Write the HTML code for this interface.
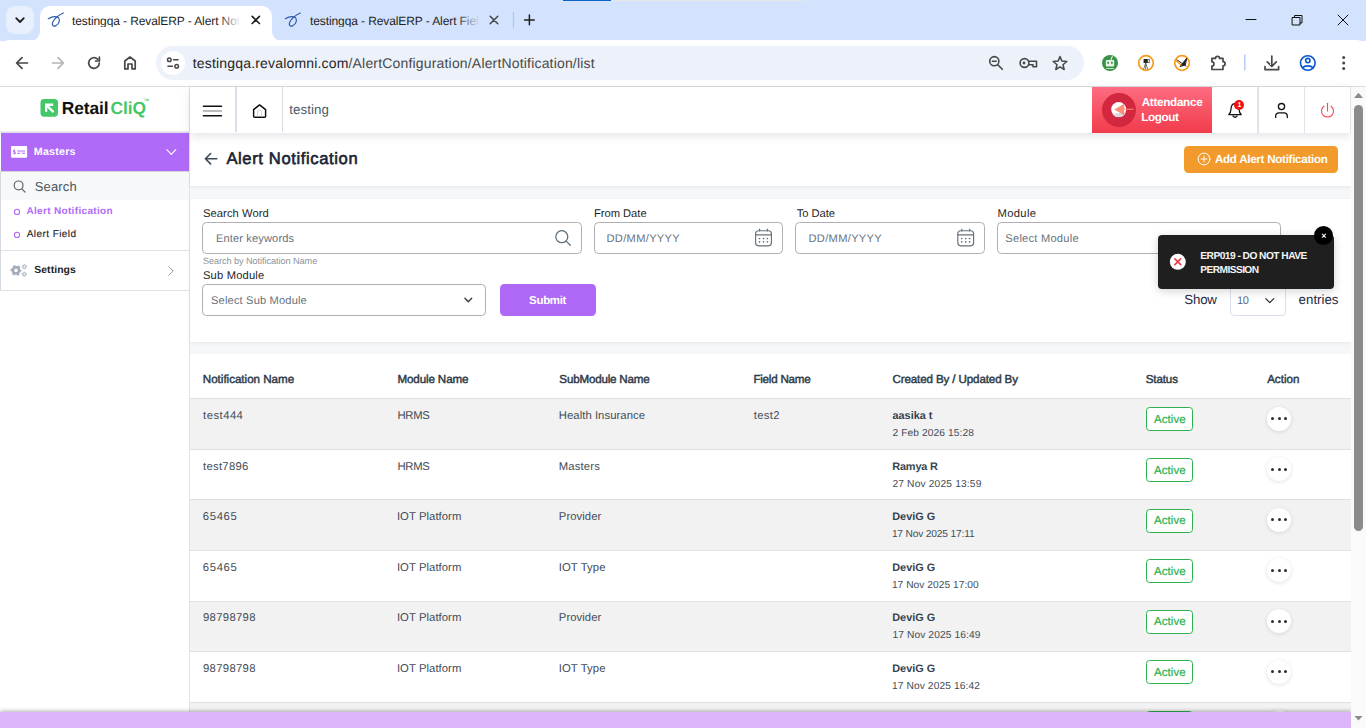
<!DOCTYPE html>
<html lang="en">
<head>
<meta charset="utf-8">
<title>testingqa - RevalERP - Alert Notification</title>
<style>
*{box-sizing:border-box;margin:0;padding:0}
html,body{width:1366px;height:728px;overflow:hidden;background:#fff}
body{font-family:"Liberation Sans",sans-serif;color:#222;position:relative;text-rendering:geometricPrecision}
.abs{position:absolute}
.t{position:absolute;white-space:nowrap;line-height:1}
svg{position:absolute;overflow:visible;fill:none}
/* ---------- browser chrome ---------- */
#tabstrip{left:0;top:0;width:1366px;height:41px;background:#d3e3fd}
#toolbar{left:0;top:40px;width:1366px;height:46px;background:#fff;border-radius:9px 9px 0 0}
#tbline{left:0;top:86px;width:1366px;height:1px;background:#dadce0}
#tabsearch{left:6px;top:6px;width:28px;height:28px;border-radius:9px;background:#e8f0fe}
#tab1{left:40px;top:6px;width:232px;height:35px;background:#fff;border-radius:10px 10px 0 0}
.flare{width:10px;height:10px;top:31px;background:radial-gradient(circle at var(--cx) 0,#d3e3fd 9.5px,#fff 10.5px)}
#omni{left:156px;top:46px;width:928px;height:34px;border-radius:17px;background:#edf2fa}
#siteinfo{left:161px;top:51px;width:24px;height:24px;border-radius:12px;background:#fff}
.fade1{left:219px;top:10px;width:22px;height:22px;background:linear-gradient(90deg,rgba(255,255,255,0),#fff)}
.fade2{left:456px;top:10px;width:24px;height:22px;background:linear-gradient(90deg,rgba(211,227,253,0),#d3e3fd)}
/* ---------- app ---------- */
#app{left:0;top:87px;width:1351px;height:641px;background:#f6f7f9;overflow:hidden}
#sidebar{left:0;top:0;width:190px;height:641px;background:#fff;border-right:1px solid #dfe3ea}
#header{left:190px;top:0;width:1161px;height:46px;background:#fff;box-shadow:0 3px 10px rgba(40,50,70,.13)}
.vline{position:absolute;top:0;width:1px;height:46px;background:#e3e6ee}
#scroll{left:1351px;top:87px;width:15px;height:641px;background:#fafafa;z-index:6}
#thumb{left:3px;top:18px;width:9px;height:426px;border-radius:5px;background:#8b8b8b}
.card{position:absolute;background:#fff;box-shadow:0 1px 3px rgba(40,50,70,.08)}
.inp{position:absolute;height:32px;border:1px solid #afafaf;border-radius:4.5px;background:#fff}
.row{position:absolute;left:0;width:1161px;border-top:1px solid #dce1e8}
.badge{position:absolute;left:956px;width:47px;height:24px;border:1.2px solid #2db24f;border-radius:3.5px;background:#fff}
.dots{position:absolute;left:1076.800px;width:24px;height:24px;border-radius:50%;background:#fff;box-shadow:0 1px 4px rgba(0,0,0,.12)}
.dots i{position:absolute;top:10.500px;width:3px;height:3px;border-radius:50%;background:#2e2e2e}
</style>
</head>
<body>

<!-- ================= BROWSER CHROME ================= -->
<div id="tabstrip" class="abs"></div>
<div class="abs" style="left:563px;top:0;width:48px;height:1px;background:#0a63c9"></div>
<div class="abs" style="left:611px;top:0;width:193px;height:1px;background:#e6e6e6"></div>
<div id="tabsearch" class="abs"></div>
<div id="tab1" class="abs"></div>
<div class="abs flare" style="left:30px;--cx:0"></div>
<div class="abs flare" style="left:272px;--cx:10px"></div>
<div id="toolbar" class="abs"></div>
<div id="tbline" class="abs"></div>
<div id="omni" class="abs"></div>
<div id="siteinfo" class="abs"></div>

<span class="t" id="t0" style="left:72.00px;top:14.55px;font-size:12px;color:#1f1f1f;letter-spacing:-0.100px;width:167px;overflow:hidden;">testingqa - RevalERP - Alert Notification</span>
<div class="abs fade1"></div>
<span class="t" id="t1" style="left:310.00px;top:14.55px;font-size:12px;color:#1f1f1f;letter-spacing:-0.100px;width:168px;overflow:hidden;">testingqa - RevalERP - Alert Field</span>
<div class="abs fade2"></div>
<span class="t" id="t2" style="left:192.80px;top:55.62px;font-size:14px;color:#1f1f1f;letter-spacing:0.174px;">testingqa.revalomni.com<span style="color:#4a4a4a">/AlertConfiguration/AlertNotification/list</span></span>

<svg width="1366" height="87" viewBox="0 0 1366 87" style="left:0;top:0" stroke-linecap="round" stroke-linejoin="round">
  <!-- tab search chevron -->
  <path d="M16.2 18.2 L20 22 L23.8 18.2" stroke="#1f1f1f" stroke-width="1.8"/>
  <!-- favicons -->
  <path d="M48.3 18.7 C52 16.6 56 16.2 58.4 17.6 C60.4 19.6 59.4 23.6 56 25.6 C53 27 51.4 24.6 52.8 22 C54.6 18.6 59 15 63.3 13" stroke="#2a5aaa" stroke-width="1.2"/>
  <path d="M285.3 18.7 C289 16.6 293 16.2 295.4 17.6 C297.4 19.6 296.4 23.6 293 25.6 C290 27 288.4 24.6 289.8 22 C291.6 18.6 296 15 300.3 13" stroke="#2a5aaa" stroke-width="1.2"/>
  <!-- tab close -->
  <path d="M252.2 16.3 L259.4 23.5 M259.4 16.3 L252.2 23.5" stroke="#1f1f1f" stroke-width="1.7"/>
  <path d="M490.2 16.2 L497.8 23.8 M497.8 16.2 L490.2 23.8" stroke="#444" stroke-width="1.5"/>
  <path d="M513.5 12 V28" stroke="#a8c7fa" stroke-width="1.2"/>
  <path d="M524.6 19.9 H534.2 M529.4 15.1 V24.7" stroke="#1f1f1f" stroke-width="1.5"/>
  <!-- window controls -->
  <path d="M1246 19.5 H1256" stroke="#111" stroke-width="1"/>
  <path d="M1292.5 17.5 h7.5 v7.5 h-7.5 z M1294.5 17.5 v-2 h7.5 v7.5 h-2" stroke="#111" stroke-width="1"/>
  <path d="M1338 15 L1348 25 M1348 15 L1338 25" stroke="#111" stroke-width="1"/>
  <!-- nav -->
  <path d="M27.5 63 H17 M22 57.6 L16.6 63 L22 68.4" stroke="#474747" stroke-width="1.7"/>
  <path d="M52.5 63 H63 M58 57.6 L63.4 63 L58 68.4" stroke="#b4b4b4" stroke-width="1.7"/>
  <path d="M99.3 63 A5.3 5.3 0 1 1 97.6 59.1 M99.4 57.2 V61 H95.6" stroke="#474747" stroke-width="1.7"/>
  <path d="M124.8 68.9 V61 L130 57 L135.2 61 V68.9 H132 V64 H128 V68.9 Z" stroke="#474747" stroke-width="1.7"/>
  <!-- site info -->
  <g stroke="#474747" stroke-width="1.5"><circle cx="169.3" cy="59.8" r="1.8"/><path d="M173.5 59.8 H178"/><circle cx="176.7" cy="66.2" r="1.8"/><path d="M168 66.2 H172.5"/></g>
  <!-- omnibox right icons -->
  <g stroke="#474747" stroke-width="1.6"><circle cx="994.3" cy="61.2" r="4.6"/><path d="M997.8 64.8 L1002.3 69.3"/><path d="M992.3 61.2 H996.3" stroke-width="1.4"/></g>
  <g stroke="#474747" stroke-width="1.6"><circle cx="1024.5" cy="63" r="4.4"/><circle cx="1024" cy="63" r="1.4" fill="#474747" stroke="none"/><path d="M1029 61.2 H1036.5 V66.8 H1033 V64.8 H1029"/></g>
  <path d="M1060 56.5 L1061.9 61.1 L1066.8 61.5 L1063 64.7 L1064.2 69.5 L1060 66.9 L1055.8 69.5 L1057 64.7 L1053.2 61.5 L1058.1 61.1 Z" stroke="#474747" stroke-width="1.5"/>
  <!-- extensions -->
  <circle cx="1110" cy="63" r="8" fill="#3a9247"/>
  <rect x="1105.8" y="60" width="8.4" height="6.4" rx="1" fill="#e6f2e6"/><rect x="1107.3" y="61.8" width="1.7" height="1.9" fill="#3a9247"/><rect x="1111" y="61.8" width="1.7" height="1.9" fill="#3a9247"/><path d="M1111 59.8 L1112.3 56.5" stroke="#e6f2e6" stroke-width="1.1"/><path d="M1106.5 68.5 H1113.5" stroke="#bfe0c0" stroke-width="1"/>
  <circle cx="1146" cy="63" r="7.3" fill="#fff" stroke="#f59b1c" stroke-width="1.7"/>
  <rect x="1143.6" y="59" width="4.2" height="4" fill="#222"/><path d="M1147.8 60 L1149.3 59 V63 L1147.8 62 M1145.7 63 L1143.7 69 M1145.7 63 L1147.7 69 M1145.7 63 V69" stroke="#555" stroke-width=".8"/>
  <circle cx="1182" cy="63" r="7.3" fill="#fff" stroke="#f59b1c" stroke-width="1.7"/>
  <path d="M1177 60 L1186 66 M1186.5 58.5 L1180 66.5 L1185 65 Z" stroke="#222" stroke-width="1" fill="#222"/><path d="M1176.5 61 L1181 65" stroke="#f59b1c" stroke-width="1.3"/>
  <path d="M1211.9 58.4 H1215.4 A2.1 2.1 0 0 1 1219.6 58.4 H1223 V61.7 A2.1 2.1 0 0 1 1223 65.900 V69.500 H1211.9 V66 A2.1 2.1 0 0 0 1211.9 61.800 Z" stroke="#474747" stroke-width="1.7"/>
  <path d="M1244.8 55 V70" stroke="#a8c7fa" stroke-width="1.3"/>
  <path d="M1271.8 56 V66 M1267.3 61.8 L1271.8 66.3 L1276.3 61.8 M1265 66.5 V69.6 H1278.6 V66.5" stroke="#474747" stroke-width="1.7"/>
  <g stroke="#0b57d0" stroke-width="1.6"><circle cx="1307.8" cy="63" r="7.3"/><circle cx="1307.8" cy="60.6" r="2.2"/><path d="M1302.6 67.8 C1304.5 65.2 1311 65.2 1313 67.8"/></g>
  <g fill="#474747"><circle cx="1343.7" cy="57.4" r="1.5"/><circle cx="1343.7" cy="63" r="1.5"/><circle cx="1343.7" cy="68.6" r="1.5"/></g>
</svg>

<!-- ================= APP ================= -->
<div id="app" class="abs">
  <div id="sidebar" class="abs"></div>
  <div class="abs" style="left:0;top:44px;width:189px;height:2px;background:linear-gradient(#eceef2,#d9dce3)"></div>
  <div class="abs" style="left:1px;top:46px;width:188px;height:38px;background:#b06af7"></div>
  <div class="abs" style="left:1px;top:84px;width:188px;height:29px;background:#f7f8fa;border-top:1px solid #d3d5da"></div>
  <div class="abs" style="left:0;top:84px;width:1px;height:120px;background:#d5d9e0"></div>
  <div class="abs" style="left:1px;top:163px;width:188px;height:1px;background:#dfe2e8"></div>
  <div class="abs" style="left:0;top:203px;width:189px;height:1px;background:#dfe2e8"></div>
</div>

<svg width="20" height="20" viewBox="0 0 20 20" style="left:40px;top:98px">
  <rect x=".5" y=".9" width="17.5" height="17.8" rx="3.6" fill="#43c767"/>
  <path d="M5 5.6 H13.2 V7.9 H9 L14.3 13.2 L12.6 14.9 L7.3 9.6 V13.8 H5 Z" fill="#fff"/>
</svg>
<span class="t" id="t3" style="left:61.71px;top:99.70px;font-size:17.4px;font-weight:700;color:#111;letter-spacing:-0.116px;">Retail<span style="color:#43c767;margin-left:2.2px">CliQ</span></span>
<svg width="8" height="5" viewBox="0 0 8 5" style="left:144.4px;top:98px"><text x="0" y="3.4" font-family="Liberation Sans, sans-serif" font-size="3.4" font-weight="700" fill="#43c767" textLength="4.8" lengthAdjust="spacingAndGlyphs">TM</text></svg>
<svg width="190" height="220" viewBox="0 0 190 220" style="left:0;top:87px" stroke-linecap="round" stroke-linejoin="round">
  <rect x="11.1" y="59" width="16" height="11.8" rx=".8" fill="#fff"/>
  <path d="M14.2 63.2 H13.4 V64.8 H15.4 V66.6 H13.2 M14.4 62.4 V67.4" stroke="#b06af7" stroke-width=".8" stroke-linecap="butt"/>
  <path d="M17.2 64 H25 M17.2 66.3 H20.4 M21.8 66.3 H25" stroke="#b06af7" stroke-width="1.1" stroke-linecap="butt"/>
  <path d="M166.8 62.7 L171.3 67.4 L175.8 62.7" stroke="#fff" stroke-width="1.1"/>
  <circle cx="18.6" cy="98.4" r="4.4" stroke="#5f6770" stroke-width="1.2"/><path d="M21.9 101.8 L25 105" stroke="#5f6770" stroke-width="1.2"/>
  <circle cx="17" cy="124.9" r="2.6" stroke="#b06af7" stroke-width="1.1"/>
  <circle cx="17" cy="147.9" r="2.6" stroke="#b06af7" stroke-width="1.1"/>
  <path d="M168.6 179.6 L173.2 184 L168.6 188.4" stroke="#9a9fa6" stroke-width="1"/>
  <!-- settings gears -->
  <g stroke="#a2acb8" fill="none" stroke-linecap="butt"><circle cx="16" cy="183.400" r="3.100" stroke-width="2.600"/><circle cx="16" cy="183.400" r="4.700" stroke-width="1.400" stroke-dasharray="2.500 2.422" stroke-dashoffset="1.250"/>
  <circle cx="24.300" cy="179.700" r="1.500" stroke-width="1"/><circle cx="24.300" cy="179.700" r="2.250" stroke-width=".800" stroke-dasharray="1.100 1.256" stroke-dashoffset=".550"/>
  <circle cx="24.300" cy="187.200" r="1.500" stroke-width="1"/><circle cx="24.300" cy="187.200" r="2.250" stroke-width=".800" stroke-dasharray="1.100 1.256" stroke-dashoffset=".550"/></g>
</svg>
<span class="t" id="t4" style="left:33.87px;top:146.61px;font-size:10.7px;font-weight:700;color:#fff;letter-spacing:0.205px;">Masters</span>
<span class="t" id="t5" style="left:34.74px;top:179.65px;font-size:13px;color:#4a5560;letter-spacing:0.145px;">Search</span>
<span class="t" id="t6" style="left:26.39px;top:206.51px;font-size:10px;font-weight:700;color:#b06af7;letter-spacing:0.336px;">Alert Notification</span>
<span class="t" id="t7" style="left:26.75px;top:229.53px;font-size:10px;letter-spacing:0.428px;-webkit-text-stroke:.12px #222;">Alert Field</span>
<span class="t" id="t8" style="left:34.25px;top:265.59px;font-size:10.4px;font-weight:700;letter-spacing:0.072px;">Settings</span>

<div class="abs" id="hdr" style="left:190px;top:87px;width:1161px;height:46px;background:#fff;z-index:3;box-shadow:0 3px 9px rgba(40,50,70,.13)">
  <div class="vline" style="left:45px;width:1.5px;background:#dbe1e8;height:45px"></div>
  <div class="vline" style="left:91.8px;width:1.2px;background:#d8dde6;height:45px"></div>
  <div class="abs" style="left:902px;top:0;width:120px;height:46px;background:linear-gradient(#fd6c81,#f23b4b)"></div>
  <div class="abs" style="left:911.8px;top:5.6px;width:34px;height:34px;border-radius:50%;background:#d3273f"></div>
  <div class="vline" style="left:1067.4px;width:1.3px;background:#dfe3ea"></div>
  <div class="vline" style="left:1114px;width:1.2px;background:#dfe3ea"></div>
  <div class="vline" style="left:1160px;width:1.2px;background:#dfe3ea"></div>
</div>
<svg width="1161" height="46" viewBox="190 87 1161 46" style="left:190px;top:87px;z-index:4" stroke-linecap="round" stroke-linejoin="round">
  <path d="M203.400 106.300 H221.500 M203.400 115.700 H221.500" stroke="#111" stroke-width="1.500"/>
  <path d="M203.400 111 H221.500" stroke="#a6a6a6" stroke-width="1.500"/>
  <path d="M253.600 109.600 L259.600 104.900 L265.600 109.600 V116.200 Q265.600 117.300 264.500 117.300 H254.700 Q253.600 117.300 253.600 116.200 Z" stroke="#0c0c0c" stroke-width="1.450"/>
  <path d="M257.600 116.600 V112 Q257.600 109.900 259.600 109.900 Q261.600 109.900 261.600 112 V116.600" stroke="#c2c6ca" stroke-width=".800"/>
  <!-- attendance icon -->
  <circle cx="1118.700" cy="109.600" r="7.500" fill="#fff"/>
  <path d="M1112.600 114 A7.500 7.500 0 0 0 1125.800 112 Z" fill="#d9d9dd"/>
  <path d="M1114.200 109.400 L1124.200 103.800 V115.200 Z" fill="#ff8f7a" stroke="none"/>
  <path d="M1124 109.300 H1133" stroke="#ff8f7a" stroke-width="1.100"/>
  <!-- bell -->
  <path d="M1228.800 114.500 H1241.200 C1239 112.700 1239.100 110.300 1238.900 108.100 C1238.600 105.100 1236.800 103.500 1235 103.500 C1233.200 103.500 1231.400 105.100 1231.100 108.100 C1230.900 110.300 1231 112.700 1228.800 114.500 Z" stroke="#111" stroke-width="1.250"/>
  <path d="M1233 116 Q1235 118.500 1237 116" stroke="#111" stroke-width="1.250"/>
  <circle cx="1239" cy="105" r="5" fill="#f80d0d"/>
  <!-- user -->
  <circle cx="1281.500" cy="106.600" r="3.100" stroke="#111" stroke-width="1.300"/>
  <path d="M1275.700 117.500 V116 Q1275.700 112.800 1279 112.800 H1284 Q1287.300 112.800 1287.300 116 V117.500" stroke="#111" stroke-width="1.300"/>
  <!-- power -->
  <path d="M1327.500 103.300 V111" stroke="#f74b55" stroke-width="1.100"/>
  <path d="M1324 106.200 A6 6 0 1 0 1331 106.200" stroke="#f74b55" stroke-width="1.100"/>
</svg>

<span class="t" id="t9" style="left:289.23px;top:102.52px;font-size:13.3px;color:#4a5a6a;letter-spacing:0.084px;z-index:4;">testing</span>
<span class="t" id="t10" style="left:1141.66px;top:96.63px;font-size:11.7px;font-weight:700;color:#fff;letter-spacing:-0.295px;z-index:4;">Attendance</span>
<span class="t" id="t11" style="left:1141.35px;top:111.63px;font-size:11.7px;font-weight:700;color:#fff;letter-spacing:-0.401px;z-index:4;">Logout</span>
<span class="t" id="t12" style="left:1237.44px;top:101.64px;font-size:7px;font-weight:700;color:#fff;z-index:4;">1</span>

<div id="scroll" class="abs"><div id="thumb" class="abs"></div>
<svg width="15" height="641" viewBox="0 0 15 641" style="left:0;top:0"><path d="M3 11 L7.500 5.800 L12 11 Z" fill="#8b8b8b"/><path d="M3.500 629 L7.500 633.600 L11.500 629 Z" fill="#8b8b8b"/></svg>
</div>

<!-- ================= MAIN ================= -->
<div class="card" style="left:190px;top:133px;width:1161px;height:53px"></div>
<div class="card" style="left:190px;top:198.500px;width:1161px;height:143.500px"></div>
<div class="card" id="tbl" style="left:190px;top:353.500px;width:1161px;height:380px;box-shadow:none">

<div class="row" style="top:44.75px;height:50.60px;background:#f2f2f2"><div class="badge" style="top:8.20px"></div><div class="dots" style="top:7.40px"><i style="left:4.700px"></i><i style="left:10.900px"></i><i style="left:17px"></i></div></div>
<div class="row" style="top:95.35px;height:50.60px;background:#fff"><div class="badge" style="top:8.20px"></div><div class="dots" style="top:7.40px"><i style="left:4.700px"></i><i style="left:10.900px"></i><i style="left:17px"></i></div></div>
<div class="row" style="top:145.95px;height:50.60px;background:#f2f2f2"><div class="badge" style="top:8.20px"></div><div class="dots" style="top:7.40px"><i style="left:4.700px"></i><i style="left:10.900px"></i><i style="left:17px"></i></div></div>
<div class="row" style="top:196.55px;height:50.60px;background:#fff"><div class="badge" style="top:8.20px"></div><div class="dots" style="top:7.40px"><i style="left:4.700px"></i><i style="left:10.900px"></i><i style="left:17px"></i></div></div>
<div class="row" style="top:247.15px;height:50.60px;background:#f2f2f2"><div class="badge" style="top:8.20px"></div><div class="dots" style="top:7.40px"><i style="left:4.700px"></i><i style="left:10.900px"></i><i style="left:17px"></i></div></div>
<div class="row" style="top:297.75px;height:50.60px;background:#fff"><div class="badge" style="top:8.20px"></div><div class="dots" style="top:7.40px"><i style="left:4.700px"></i><i style="left:10.900px"></i><i style="left:17px"></i></div></div>
<div class="row" style="top:348.35px;height:50.60px;background:#f2f2f2"><div class="badge" style="top:8.20px"></div><div class="dots" style="top:7.40px"><i style="left:4.700px"></i><i style="left:10.900px"></i><i style="left:17px"></i></div></div>
</div>
<div class="abs" style="left:0;top:711.500px;width:1351px;height:17px;background:#dcb5fb;box-shadow:0 -1px 4px rgba(0,0,0,.16)"></div>
<svg width="20" height="16" viewBox="203 150 20 16" style="left:203px;top:150px" stroke-linecap="round" stroke-linejoin="round"><path d="M216.800 158.700 H205.600 M210.600 153.500 L205.400 158.700 L210.600 163.900" stroke="#3a4a5a" stroke-width="1.600"/></svg>
<span class="t" id="t13" style="left:226.38px;top:150.61px;font-size:16.6px;color:#1a2233;letter-spacing:0.613px;-webkit-text-stroke:.6px;">Alert Notification</span>
<div class="abs" style="left:1184px;top:146.300px;width:153.800px;height:26.400px;border-radius:4.500px;background:#f29b2c"></div>
<svg width="16" height="16" viewBox="0 0 16 16" style="left:1196.400px;top:150.700px" stroke-linecap="round"><circle cx="8" cy="8" r="5.900" stroke="#fff" stroke-width="1"/><path d="M5.100 8 H10.900 M8 5.100 V10.900" stroke="#fff" stroke-width="1"/></svg>
<span class="t" id="t14" style="left:1214.95px;top:153.58px;font-size:11.6px;font-weight:700;color:#fff;letter-spacing:-0.276px;">Add Alert Notification</span>
<span class="t" id="t15" style="left:203.00px;top:208.67px;font-size:11.2px;color:#1f1f1f;letter-spacing:0.071px;">Search Word</span>
<span class="t" id="t16" style="left:593.98px;top:208.67px;font-size:11.2px;color:#1f1f1f;letter-spacing:-0.026px;">From Date</span>
<span class="t" id="t17" style="left:796.68px;top:208.68px;font-size:11.2px;color:#1f1f1f;letter-spacing:-0.036px;">To Date</span>
<span class="t" id="t18" style="left:997.57px;top:208.67px;font-size:11.2px;color:#1f1f1f;letter-spacing:0.340px;">Module</span>
<div class="inp" style="left:202px;top:222px;width:379.500px"></div>
<div class="inp" style="left:594px;top:222px;width:188.500px"></div>
<div class="inp" style="left:795px;top:222px;width:189.500px"></div>
<div class="inp" style="left:996.800px;top:222px;width:284px"></div>
<div class="inp" style="left:202px;top:284px;width:283.500px"></div>
<span class="t" id="t19" style="left:215.94px;top:233.59px;font-size:11.1px;color:#66717d;letter-spacing:0.130px;">Enter keywords</span>
<span class="t" id="t20" style="left:606.53px;top:233.60px;font-size:11.1px;color:#66717d;letter-spacing:0.327px;">DD/MM/YYYY</span>
<span class="t" id="t21" style="left:808.53px;top:233.60px;font-size:11.1px;color:#66717d;letter-spacing:0.327px;">DD/MM/YYYY</span>
<span class="t" id="t22" style="left:1005.33px;top:233.61px;font-size:11.1px;color:#66717d;letter-spacing:0.244px;">Select Module</span>
<span class="t" id="t23" style="left:202.90px;top:256.73px;font-size:9.2px;color:#8e9399;letter-spacing:-0.078px;">Search by Notification Name</span>
<span class="t" id="t24" style="left:202.99px;top:270.57px;font-size:11.2px;color:#1f1f1f;letter-spacing:0.166px;">Sub Module</span>
<span class="t" id="t25" style="left:211.07px;top:295.60px;font-size:11.1px;color:#66717d;letter-spacing:0.162px;">Select Sub Module</span>
<div class="abs" style="left:500px;top:284px;width:95.800px;height:31.500px;border-radius:4.500px;background:#b068f6"></div>
<span class="t" id="t26" style="left:529.11px;top:295.63px;font-size:11.5px;font-weight:700;color:#fff;letter-spacing:-0.334px;">Submit</span>
<svg width="1161" height="120" viewBox="190 220 1161 120" style="left:190px;top:220px" stroke-linecap="round" stroke-linejoin="round">
  <circle cx="561.800" cy="236.700" r="6" stroke="#60707c" stroke-width="1.250"/><path d="M566.100 241.100 L570.300 245.300" stroke="#60707c" stroke-width="1.300"/>
  <g stroke="#66717d" stroke-width="1.150"><rect x="755.6" y="230.700" width="15.800" height="15.100" rx="3"/><path d="M755.6 234.800 H771.4 M759.6 229.100 V231 M767.4 229.100 V231"/></g>
  <g fill="#66717d"><circle cx="759.5" cy="238.5" r=".85"/><circle cx="763.5" cy="238.5" r=".85"/><circle cx="767.4" cy="238.5" r=".85"/><circle cx="759.5" cy="241.8" r=".85"/><circle cx="763.5" cy="241.8" r=".85"/><circle cx="767.4" cy="241.8" r=".85"/></g>
  <g stroke="#66717d" stroke-width="1.150"><rect x="957.8" y="230.700" width="15.800" height="15.100" rx="3"/><path d="M957.8 234.800 H973.6 M961.8 229.100 V231 M969.6 229.100 V231"/></g>
  <g fill="#66717d"><circle cx="961.7" cy="238.5" r=".85"/><circle cx="965.7" cy="238.5" r=".85"/><circle cx="969.6" cy="238.5" r=".85"/><circle cx="961.7" cy="241.8" r=".85"/><circle cx="965.7" cy="241.8" r=".85"/><circle cx="969.6" cy="241.8" r=".85"/></g>
  <path d="M464.900 298.300 L468.300 301.800 L471.700 298.300" stroke="#333" stroke-width="1.300"/>
</svg>
<span class="t" id="t27" style="left:1184.26px;top:292.55px;font-size:13.3px;color:#1f2a44;letter-spacing:-0.194px;">Show</span>
<div class="abs" style="left:1230.300px;top:284px;width:55.300px;height:31.500px;border:1px solid #d9e0ea;border-radius:4px;background:#fff"></div>
<span class="t" id="t28" style="left:1237.07px;top:295.64px;font-size:11px;color:#5a6b85;letter-spacing:-0.423px;">10</span>
<svg width="12" height="8" viewBox="0 0 12 8" style="left:1264px;top:296.500px" stroke-linecap="round" stroke-linejoin="round"><path d="M1.800 1.600 L5.800 5.600 L9.800 1.600" stroke="#333" stroke-width="1.300"/></svg>
<span class="t" id="t29" style="left:1298.60px;top:292.55px;font-size:13.3px;color:#1f2a44;">entries</span>
<div class="abs" style="left:1158px;top:235px;width:176px;height:53.600px;border-radius:4px;background:#1f1f1f;box-shadow:0 2px 10px rgba(0,0,0,.18)"></div>
<div class="abs" style="left:1313.800px;top:225.800px;width:19.600px;height:19.600px;border-radius:50%;background:#000"></div>
<svg width="180" height="70" viewBox="1158 222 180 70" style="left:1158px;top:222px" stroke-linecap="round"><circle cx="1177.800" cy="261.800" r="8" fill="#fff"/><path d="M1174.900 258.900 L1180.700 264.700 M1180.700 258.900 L1174.900 264.700" stroke="#e8434f" stroke-width="1.700"/><path d="M1322.300 234.100 L1325.500 237.300 M1325.500 234.100 L1322.300 237.300" stroke="#fff" stroke-width="1.050"/></svg>
<span class="t" id="t30" style="left:1200.36px;top:251.67px;font-size:10.2px;font-weight:700;color:#f4f4f4;letter-spacing:-0.531px;">ERP019 - DO NOT HAVE</span>
<span class="t" id="t31" style="left:1200.36px;top:265.57px;font-size:10.2px;font-weight:700;color:#f4f4f4;letter-spacing:-0.584px;">PERMISSION</span>
<span class="t" id="t32" style="left:202.84px;top:373.73px;font-size:11.6px;-webkit-text-stroke:.45px;color:#2c3a47;letter-spacing:-0.015px;">Notification Name</span>
<span class="t" id="t33" style="left:397.46px;top:373.73px;font-size:11.6px;-webkit-text-stroke:.45px;color:#2c3a47;letter-spacing:-0.118px;">Module Name</span>
<span class="t" id="t34" style="left:559.34px;top:373.73px;font-size:11.6px;-webkit-text-stroke:.45px;color:#2c3a47;letter-spacing:-0.184px;">SubModule Name</span>
<span class="t" id="t35" style="left:753.39px;top:373.73px;font-size:11.6px;-webkit-text-stroke:.45px;color:#2c3a47;letter-spacing:-0.212px;">Field Name</span>
<span class="t" id="t36" style="left:892.48px;top:373.73px;font-size:11.6px;-webkit-text-stroke:.45px;color:#2c3a47;letter-spacing:-0.124px;">Created By / Updated By</span>
<span class="t" id="t37" style="left:1145.76px;top:373.73px;font-size:11.6px;-webkit-text-stroke:.45px;color:#2c3a47;letter-spacing:-0.127px;">Status</span>
<span class="t" id="t38" style="left:1267.13px;top:373.73px;font-size:11.6px;-webkit-text-stroke:.45px;color:#2c3a47;">Action</span>
<span class="t" id="t39" style="left:203.09px;top:410.72px;font-size:11.3px;color:#444c56;letter-spacing:0.462px;">test444</span>
<span class="t" id="t40" style="left:397.48px;top:410.71px;font-size:11.3px;color:#444c56;letter-spacing:-0.280px;">HRMS</span>
<span class="t" id="t41" style="left:558.77px;top:410.72px;font-size:11.3px;color:#444c56;letter-spacing:0.053px;">Health Insurance</span>
<span class="t" id="t42" style="left:753.81px;top:410.71px;font-size:11.3px;color:#444c56;letter-spacing:0.289px;">test2</span>
<span class="t" id="t43" style="left:892.57px;top:410.57px;font-size:10.9px;font-weight:700;color:#37424e;letter-spacing:-0.027px;">aasika t</span>
<span class="t" id="t44" style="left:892.48px;top:428.67px;font-size:10.2px;color:#444c56;letter-spacing:0.105px;">2 Feb 2026 15:28</span>
<span class="t" id="t45" style="left:1154.02px;top:414.51px;font-size:11.5px;color:#2db24f;letter-spacing:0.056px;-webkit-text-stroke:.2px;">Active</span>
<span class="t" id="t46" style="left:203.06px;top:461.72px;font-size:11.3px;color:#444c56;letter-spacing:0.270px;">test7896</span>
<span class="t" id="t47" style="left:397.48px;top:461.71px;font-size:11.3px;color:#444c56;letter-spacing:-0.280px;">HRMS</span>
<span class="t" id="t48" style="left:558.77px;top:461.72px;font-size:11.3px;color:#444c56;letter-spacing:0.150px;">Masters</span>
<span class="t" id="t49" style="left:892.25px;top:461.57px;font-size:10.9px;font-weight:700;color:#37424e;letter-spacing:-0.156px;">Ramya R</span>
<span class="t" id="t50" style="left:892.45px;top:479.67px;font-size:10.2px;color:#444c56;letter-spacing:0.174px;">27 Nov 2025 13:59</span>
<span class="t" id="t51" style="left:1154.02px;top:465.71px;font-size:11.5px;color:#2db24f;letter-spacing:0.056px;-webkit-text-stroke:.2px;">Active</span>
<span class="t" id="t52" style="left:202.81px;top:511.72px;font-size:11.3px;color:#444c56;letter-spacing:0.654px;">65465</span>
<span class="t" id="t53" style="left:396.93px;top:511.71px;font-size:11.3px;color:#444c56;letter-spacing:0.055px;">IOT Platform</span>
<span class="t" id="t54" style="left:558.81px;top:511.72px;font-size:11.3px;color:#444c56;letter-spacing:0.066px;">Provider</span>
<span class="t" id="t55" style="left:892.25px;top:511.57px;font-size:10.9px;font-weight:700;color:#37424e;letter-spacing:0.006px;">DeviG G</span>
<span class="t" id="t56" style="left:891.88px;top:529.67px;font-size:10.2px;color:#444c56;letter-spacing:-0.167px;">17 Nov 2025 17:11</span>
<span class="t" id="t57" style="left:1154.02px;top:515.66px;font-size:11.5px;color:#2db24f;letter-spacing:0.056px;-webkit-text-stroke:.2px;">Active</span>
<span class="t" id="t58" style="left:202.81px;top:562.72px;font-size:11.3px;color:#444c56;letter-spacing:0.654px;">65465</span>
<span class="t" id="t59" style="left:396.93px;top:562.71px;font-size:11.3px;color:#444c56;letter-spacing:0.055px;">IOT Platform</span>
<span class="t" id="t60" style="left:558.73px;top:562.72px;font-size:11.3px;color:#444c56;letter-spacing:0.102px;">IOT Type</span>
<span class="t" id="t61" style="left:892.25px;top:562.57px;font-size:10.9px;font-weight:700;color:#37424e;letter-spacing:0.006px;">DeviG G</span>
<span class="t" id="t62" style="left:891.88px;top:580.67px;font-size:10.2px;color:#444c56;letter-spacing:0.047px;">17 Nov 2025 17:00</span>
<span class="t" id="t63" style="left:1154.02px;top:566.61px;font-size:11.5px;color:#2db24f;letter-spacing:0.056px;-webkit-text-stroke:.2px;">Active</span>
<span class="t" id="t64" style="left:202.97px;top:612.72px;font-size:11.3px;color:#444c56;letter-spacing:0.319px;">98798798</span>
<span class="t" id="t65" style="left:396.93px;top:612.71px;font-size:11.3px;color:#444c56;letter-spacing:0.055px;">IOT Platform</span>
<span class="t" id="t66" style="left:558.81px;top:612.72px;font-size:11.3px;color:#444c56;letter-spacing:0.066px;">Provider</span>
<span class="t" id="t67" style="left:892.25px;top:612.57px;font-size:10.9px;font-weight:700;color:#37424e;letter-spacing:0.006px;">DeviG G</span>
<span class="t" id="t68" style="left:892.39px;top:630.67px;font-size:10.2px;color:#444c56;letter-spacing:0.123px;">17 Nov 2025 16:49</span>
<span class="t" id="t69" style="left:1154.02px;top:616.56px;font-size:11.5px;color:#2db24f;letter-spacing:0.056px;-webkit-text-stroke:.2px;">Active</span>
<span class="t" id="t70" style="left:202.97px;top:663.72px;font-size:11.3px;color:#444c56;letter-spacing:0.319px;">98798798</span>
<span class="t" id="t71" style="left:396.93px;top:663.71px;font-size:11.3px;color:#444c56;letter-spacing:0.055px;">IOT Platform</span>
<span class="t" id="t72" style="left:558.73px;top:663.72px;font-size:11.3px;color:#444c56;letter-spacing:0.102px;">IOT Type</span>
<span class="t" id="t73" style="left:892.25px;top:663.57px;font-size:10.9px;font-weight:700;color:#37424e;letter-spacing:0.006px;">DeviG G</span>
<span class="t" id="t74" style="left:891.88px;top:681.67px;font-size:10.2px;color:#444c56;letter-spacing:0.122px;">17 Nov 2025 16:42</span>
<span class="t" id="t75" style="left:1154.02px;top:667.51px;font-size:11.5px;color:#2db24f;letter-spacing:0.056px;-webkit-text-stroke:.2px;">Active</span>
<span class="t" id="t76" style="left:202.97px;top:714.72px;font-size:11.3px;color:#444c56;letter-spacing:0.614px;">98798</span>
<span class="t" id="t77" style="left:396.93px;top:714.71px;font-size:11.3px;color:#444c56;letter-spacing:0.055px;">IOT Platform</span>
<span class="t" id="t78" style="left:558.81px;top:714.72px;font-size:11.3px;color:#444c56;letter-spacing:0.066px;">Provider</span>
<span class="t" id="t79" style="left:892.25px;top:714.57px;font-size:10.9px;font-weight:700;color:#37424e;letter-spacing:0.006px;">DeviG G</span>
<span class="t" id="t80" style="left:893.10px;top:731.47px;font-size:10.2px;color:#444c56;">17 Nov 2025 16:40</span>
<span class="t" id="t81" style="left:1154.02px;top:718.71px;font-size:11.5px;color:#2db24f;letter-spacing:0.056px;-webkit-text-stroke:.2px;">Active</span>
<div class="abs" style="left:0;top:711.500px;width:1351px;height:17px;background:#dcb5fb;box-shadow:0 -1px 4px rgba(0,0,0,.16)"></div>
</body>
</html>
